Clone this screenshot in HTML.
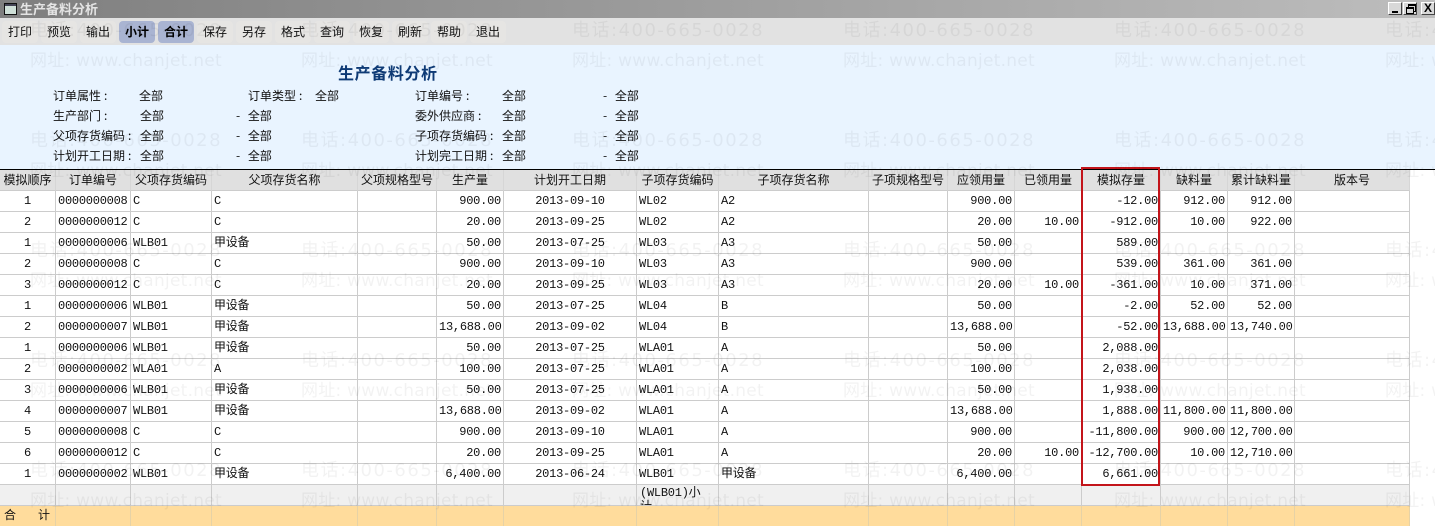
<!DOCTYPE html>
<html lang="zh"><head><meta charset="utf-8"><title>生产备料分析</title>
<style>
html,body{margin:0;padding:0;width:1435px;height:526px;overflow:hidden;background:#fff}
body{position:relative;font:12px/14px "Liberation Mono","WenQuanYi Zen Hei","Noto Sans CJK SC",monospace;color:#111}
.abs,.f{position:absolute;white-space:nowrap}
#tb{position:absolute;left:0;top:0;width:1435px;height:18px;background:linear-gradient(90deg,#7f7f7f,#bdbdbd)}
#tt{position:absolute;left:20px;top:2px;color:#e4e4e4;font-weight:bold;font-family:"WenQuanYi Zen Hei","Noto Sans CJK SC",sans-serif;font-size:13px;line-height:14px}
.ic{position:absolute;left:4px;top:3px;width:11px;height:10px;border:1px solid #111;background:#cfe0d8;box-shadow:inset 0 2px 0 #445}
.wb{position:absolute;top:2px;width:14px;height:13px;background:#d8d8d8;border:1px solid;border-color:#fff #444 #444 #fff;box-sizing:border-box;color:#000}
#bar{position:absolute;left:0;top:18px;width:1435px;height:27px;background:#e2e2e2}
.b{position:absolute;top:3px;width:36px;height:22px;line-height:22px;text-align:center;border-radius:4px;background:#e6e5e3;font-family:"WenQuanYi Zen Hei","Noto Sans CJK SC",sans-serif}
.b.on{background:#a9b4d2;font-weight:bold;color:#000}
#pn{position:absolute;left:0;top:45px;width:1435px;height:124px;background:#e9f4ff}
#line{position:absolute;left:0;top:169px;width:1435px;height:1px;background:#000}
#ti{position:absolute;left:338px;top:63px;font:bold 16px/19px "Noto Sans CJK SC",sans-serif;color:#0e3a75;letter-spacing:.6px}
.f{font-family:"WenQuanYi Zen Hei","Noto Sans CJK SC",sans-serif;word-spacing:5px}
u{text-decoration:none;margin-left:3px}
table{position:absolute;left:0;top:170px;width:1410px;table-layout:fixed;border-collapse:separate;border-spacing:0}
td,th{height:20px;padding:0;border-right:1px solid #ccc;border-bottom:1px solid #ccc;overflow:hidden;white-space:nowrap;font-weight:normal;box-sizing:content-box;letter-spacing:-.25px;line-height:14px;vertical-align:middle}
th{background:#e0e0e0;text-align:center;letter-spacing:0;border-right-color:#d6d6d6;font-family:"WenQuanYi Zen Hei","Noto Sans CJK SC",sans-serif}
td{background:#fff;padding:0 2px 0 2px}
td.r{text-align:right}
td.c{text-align:center}
tr.s td{background:#f0f0f0}
tr.t td{background:#ffdc9c;border-bottom:0;border-right-color:#e6d2a6}
#red{position:absolute;left:1081px;top:167px;width:79px;height:319px;box-sizing:border-box;border:2px solid #c3141a}
.wm{position:absolute;white-space:nowrap;color:rgba(0,0,0,.05);font:18px/22px "DejaVu Sans","Noto Sans CJK SC",sans-serif;letter-spacing:1.5px;pointer-events:none}
.wm.w{font-size:17px;letter-spacing:.25px}
</style></head><body>
<div id="tb"><div class="ic"></div><div id="tt">生产备料分析</div>
<div class="wb" style="left:1388px"><div class="abs" style="left:3px;top:8px;width:6px;height:2px;background:#000"></div></div>
<div class="wb" style="left:1403px"><div class="abs" style="left:4px;top:1px;width:6px;height:5px;border:1px solid #000;border-top-width:2px"></div><div class="abs" style="left:2px;top:4px;width:6px;height:4px;border:1px solid #000;border-top-width:2px;background:#d8d8d8"></div></div>
<div class="wb" style="left:1421px;width:14px;font:bold 12px/11px 'Liberation Sans',sans-serif;text-align:center">X</div></div>
<div id="bar">
<div class="b" style="left:2px">打印</div><div class="b" style="left:41px">预览</div><div class="b" style="left:80px">输出</div><div class="b on" style="left:119px">小计</div><div class="b on" style="left:158px">合计</div><div class="b" style="left:197px">保存</div><div class="b" style="left:236px">另存</div><div class="b" style="left:275px">格式</div><div class="b" style="left:314px">查询</div><div class="b" style="left:353px">恢复</div><div class="b" style="left:392px">刷新</div><div class="b" style="left:431px">帮助</div><div class="b" style="left:470px">退出</div>
</div>
<div id="pn"></div><div id="line"></div>
<div id="ti">生产备料分析</div>
<div class="f" style="left:53px;top:89px">订单属性<u>:</u></div><div class="f" style="left:139px;top:89px">全部</div><div class="f" style="left:248px;top:89px">订单类型<u>:</u></div><div class="f" style="left:315px;top:89px">全部</div><div class="f" style="left:415px;top:89px">订单编号<u>:</u></div><div class="f" style="left:502px;top:89px">全部</div><div class="f" style="left:603px;top:89px">- 全部</div>
<div class="f" style="left:53px;top:109px">生产部门<u>:</u></div><div class="f" style="left:140px;top:109px">全部</div><div class="f" style="left:236px;top:109px">- 全部</div><div class="f" style="left:415px;top:109px">委外供应商<u>:</u></div><div class="f" style="left:502px;top:109px">全部</div><div class="f" style="left:603px;top:109px">- 全部</div>
<div class="f" style="left:53px;top:129px">父项存货编码<u>:</u></div><div class="f" style="left:140px;top:129px">全部</div><div class="f" style="left:236px;top:129px">- 全部</div><div class="f" style="left:415px;top:129px">子项存货编码<u>:</u></div><div class="f" style="left:502px;top:129px">全部</div><div class="f" style="left:603px;top:129px">- 全部</div>
<div class="f" style="left:53px;top:149px">计划开工日期<u>:</u></div><div class="f" style="left:140px;top:149px">全部</div><div class="f" style="left:236px;top:149px">- 全部</div><div class="f" style="left:415px;top:149px">计划完工日期<u>:</u></div><div class="f" style="left:502px;top:149px">全部</div><div class="f" style="left:603px;top:149px">- 全部</div>
<table>
<colgroup><col style="width:56px"><col style="width:75px"><col style="width:81px"><col style="width:146px"><col style="width:79px"><col style="width:67px"><col style="width:133px"><col style="width:82px"><col style="width:150px"><col style="width:79px"><col style="width:67px"><col style="width:67px"><col style="width:79px"><col style="width:67px"><col style="width:67px"><col style="width:115px"></colgroup>
<tr><th>模拟顺序</th><th>订单编号</th><th>父项存货编码</th><th>父项存货名称</th><th>父项规格型号</th><th>生产量</th><th>计划开工日期</th><th>子项存货编码</th><th>子项存货名称</th><th>子项规格型号</th><th>应领用量</th><th>已领用量</th><th>模拟存量</th><th>缺料量</th><th>累计缺料量</th><th>版本号</th></tr>
<tr><td class="c">1</td><td>0000000008</td><td>C</td><td>C</td><td></td><td class="r">900.00</td><td class="c">2013-09-10</td><td>WL02</td><td>A2</td><td></td><td class="r">900.00</td><td class="r"></td><td class="r">-12.00</td><td class="r">912.00</td><td class="r">912.00</td><td></td></tr>
<tr><td class="c">2</td><td>0000000012</td><td>C</td><td>C</td><td></td><td class="r">20.00</td><td class="c">2013-09-25</td><td>WL02</td><td>A2</td><td></td><td class="r">20.00</td><td class="r">10.00</td><td class="r">-912.00</td><td class="r">10.00</td><td class="r">922.00</td><td></td></tr>
<tr><td class="c">1</td><td>0000000006</td><td>WLB01</td><td>甲设备</td><td></td><td class="r">50.00</td><td class="c">2013-07-25</td><td>WL03</td><td>A3</td><td></td><td class="r">50.00</td><td class="r"></td><td class="r">589.00</td><td class="r"></td><td class="r"></td><td></td></tr>
<tr><td class="c">2</td><td>0000000008</td><td>C</td><td>C</td><td></td><td class="r">900.00</td><td class="c">2013-09-10</td><td>WL03</td><td>A3</td><td></td><td class="r">900.00</td><td class="r"></td><td class="r">539.00</td><td class="r">361.00</td><td class="r">361.00</td><td></td></tr>
<tr><td class="c">3</td><td>0000000012</td><td>C</td><td>C</td><td></td><td class="r">20.00</td><td class="c">2013-09-25</td><td>WL03</td><td>A3</td><td></td><td class="r">20.00</td><td class="r">10.00</td><td class="r">-361.00</td><td class="r">10.00</td><td class="r">371.00</td><td></td></tr>
<tr><td class="c">1</td><td>0000000006</td><td>WLB01</td><td>甲设备</td><td></td><td class="r">50.00</td><td class="c">2013-07-25</td><td>WL04</td><td>B</td><td></td><td class="r">50.00</td><td class="r"></td><td class="r">-2.00</td><td class="r">52.00</td><td class="r">52.00</td><td></td></tr>
<tr><td class="c">2</td><td>0000000007</td><td>WLB01</td><td>甲设备</td><td></td><td class="r">13,688.00</td><td class="c">2013-09-02</td><td>WL04</td><td>B</td><td></td><td class="r">13,688.00</td><td class="r"></td><td class="r">-52.00</td><td class="r">13,688.00</td><td class="r">13,740.00</td><td></td></tr>
<tr><td class="c">1</td><td>0000000006</td><td>WLB01</td><td>甲设备</td><td></td><td class="r">50.00</td><td class="c">2013-07-25</td><td>WLA01</td><td>A</td><td></td><td class="r">50.00</td><td class="r"></td><td class="r">2,088.00</td><td class="r"></td><td class="r"></td><td></td></tr>
<tr><td class="c">2</td><td>0000000002</td><td>WLA01</td><td>A</td><td></td><td class="r">100.00</td><td class="c">2013-07-25</td><td>WLA01</td><td>A</td><td></td><td class="r">100.00</td><td class="r"></td><td class="r">2,038.00</td><td class="r"></td><td class="r"></td><td></td></tr>
<tr><td class="c">3</td><td>0000000006</td><td>WLB01</td><td>甲设备</td><td></td><td class="r">50.00</td><td class="c">2013-07-25</td><td>WLA01</td><td>A</td><td></td><td class="r">50.00</td><td class="r"></td><td class="r">1,938.00</td><td class="r"></td><td class="r"></td><td></td></tr>
<tr><td class="c">4</td><td>0000000007</td><td>WLB01</td><td>甲设备</td><td></td><td class="r">13,688.00</td><td class="c">2013-09-02</td><td>WLA01</td><td>A</td><td></td><td class="r">13,688.00</td><td class="r"></td><td class="r">1,888.00</td><td class="r">11,800.00</td><td class="r">11,800.00</td><td></td></tr>
<tr><td class="c">5</td><td>0000000008</td><td>C</td><td>C</td><td></td><td class="r">900.00</td><td class="c">2013-09-10</td><td>WLA01</td><td>A</td><td></td><td class="r">900.00</td><td class="r"></td><td class="r">-11,800.00</td><td class="r">900.00</td><td class="r">12,700.00</td><td></td></tr>
<tr><td class="c">6</td><td>0000000012</td><td>C</td><td>C</td><td></td><td class="r">20.00</td><td class="c">2013-09-25</td><td>WLA01</td><td>A</td><td></td><td class="r">20.00</td><td class="r">10.00</td><td class="r">-12,700.00</td><td class="r">10.00</td><td class="r">12,710.00</td><td></td></tr>
<tr><td class="c">1</td><td>0000000002</td><td>WLB01</td><td>甲设备</td><td></td><td class="r">6,400.00</td><td class="c">2013-06-24</td><td>WLB01</td><td>甲设备</td><td></td><td class="r">6,400.00</td><td class="r"></td><td class="r">6,661.00</td><td class="r"></td><td class="r"></td><td></td></tr>
<tr class="s"><td></td><td></td><td></td><td></td><td></td><td></td><td></td><td style="vertical-align:top;white-space:normal"><div style="height:20px;overflow:hidden;padding:1px 0 0 1px;box-sizing:border-box">(WLB01)小<br>计</div></td><td></td><td></td><td></td><td></td><td></td><td></td><td></td><td></td></tr>
<tr class="t"><td style="padding-left:4px;letter-spacing:0">合<span style="margin-left:22px">计</span></td><td></td><td></td><td></td><td></td><td></td><td></td><td></td><td></td><td></td><td></td><td></td><td></td><td></td><td></td><td></td></tr>
</table>
<div id="red"></div>
<div class="wm" style="left:30px;top:20px">电话:400-665-0028</div><div class="wm" style="left:301px;top:20px">电话:400-665-0028</div><div class="wm" style="left:572px;top:20px">电话:400-665-0028</div><div class="wm" style="left:843px;top:20px">电话:400-665-0028</div><div class="wm" style="left:1114px;top:20px">电话:400-665-0028</div><div class="wm" style="left:1385px;top:20px">电话:400-665-0028</div>
<div class="wm w" style="left:30px;top:50px">网址: www.chanjet.net</div><div class="wm w" style="left:301px;top:50px">网址: www.chanjet.net</div><div class="wm w" style="left:572px;top:50px">网址: www.chanjet.net</div><div class="wm w" style="left:843px;top:50px">网址: www.chanjet.net</div><div class="wm w" style="left:1114px;top:50px">网址: www.chanjet.net</div><div class="wm w" style="left:1385px;top:50px">网址: www.chanjet.net</div>
<div class="wm" style="left:30px;top:130px">电话:400-665-0028</div><div class="wm" style="left:301px;top:130px">电话:400-665-0028</div><div class="wm" style="left:572px;top:130px">电话:400-665-0028</div><div class="wm" style="left:843px;top:130px">电话:400-665-0028</div><div class="wm" style="left:1114px;top:130px">电话:400-665-0028</div><div class="wm" style="left:1385px;top:130px">电话:400-665-0028</div>
<div class="wm w" style="left:30px;top:160px">网址: www.chanjet.net</div><div class="wm w" style="left:301px;top:160px">网址: www.chanjet.net</div><div class="wm w" style="left:572px;top:160px">网址: www.chanjet.net</div><div class="wm w" style="left:843px;top:160px">网址: www.chanjet.net</div><div class="wm w" style="left:1114px;top:160px">网址: www.chanjet.net</div><div class="wm w" style="left:1385px;top:160px">网址: www.chanjet.net</div>
<div class="wm" style="left:30px;top:240px">电话:400-665-0028</div><div class="wm" style="left:301px;top:240px">电话:400-665-0028</div><div class="wm" style="left:572px;top:240px">电话:400-665-0028</div><div class="wm" style="left:843px;top:240px">电话:400-665-0028</div><div class="wm" style="left:1114px;top:240px">电话:400-665-0028</div><div class="wm" style="left:1385px;top:240px">电话:400-665-0028</div>
<div class="wm w" style="left:30px;top:270px">网址: www.chanjet.net</div><div class="wm w" style="left:301px;top:270px">网址: www.chanjet.net</div><div class="wm w" style="left:572px;top:270px">网址: www.chanjet.net</div><div class="wm w" style="left:843px;top:270px">网址: www.chanjet.net</div><div class="wm w" style="left:1114px;top:270px">网址: www.chanjet.net</div><div class="wm w" style="left:1385px;top:270px">网址: www.chanjet.net</div>
<div class="wm" style="left:30px;top:350px">电话:400-665-0028</div><div class="wm" style="left:301px;top:350px">电话:400-665-0028</div><div class="wm" style="left:572px;top:350px">电话:400-665-0028</div><div class="wm" style="left:843px;top:350px">电话:400-665-0028</div><div class="wm" style="left:1114px;top:350px">电话:400-665-0028</div><div class="wm" style="left:1385px;top:350px">电话:400-665-0028</div>
<div class="wm w" style="left:30px;top:380px">网址: www.chanjet.net</div><div class="wm w" style="left:301px;top:380px">网址: www.chanjet.net</div><div class="wm w" style="left:572px;top:380px">网址: www.chanjet.net</div><div class="wm w" style="left:843px;top:380px">网址: www.chanjet.net</div><div class="wm w" style="left:1114px;top:380px">网址: www.chanjet.net</div><div class="wm w" style="left:1385px;top:380px">网址: www.chanjet.net</div>
<div class="wm" style="left:30px;top:460px">电话:400-665-0028</div><div class="wm" style="left:301px;top:460px">电话:400-665-0028</div><div class="wm" style="left:572px;top:460px">电话:400-665-0028</div><div class="wm" style="left:843px;top:460px">电话:400-665-0028</div><div class="wm" style="left:1114px;top:460px">电话:400-665-0028</div><div class="wm" style="left:1385px;top:460px">电话:400-665-0028</div>
<div class="wm w" style="left:30px;top:490px">网址: www.chanjet.net</div><div class="wm w" style="left:301px;top:490px">网址: www.chanjet.net</div><div class="wm w" style="left:572px;top:490px">网址: www.chanjet.net</div><div class="wm w" style="left:843px;top:490px">网址: www.chanjet.net</div><div class="wm w" style="left:1114px;top:490px">网址: www.chanjet.net</div><div class="wm w" style="left:1385px;top:490px">网址: www.chanjet.net</div>
</body></html>
